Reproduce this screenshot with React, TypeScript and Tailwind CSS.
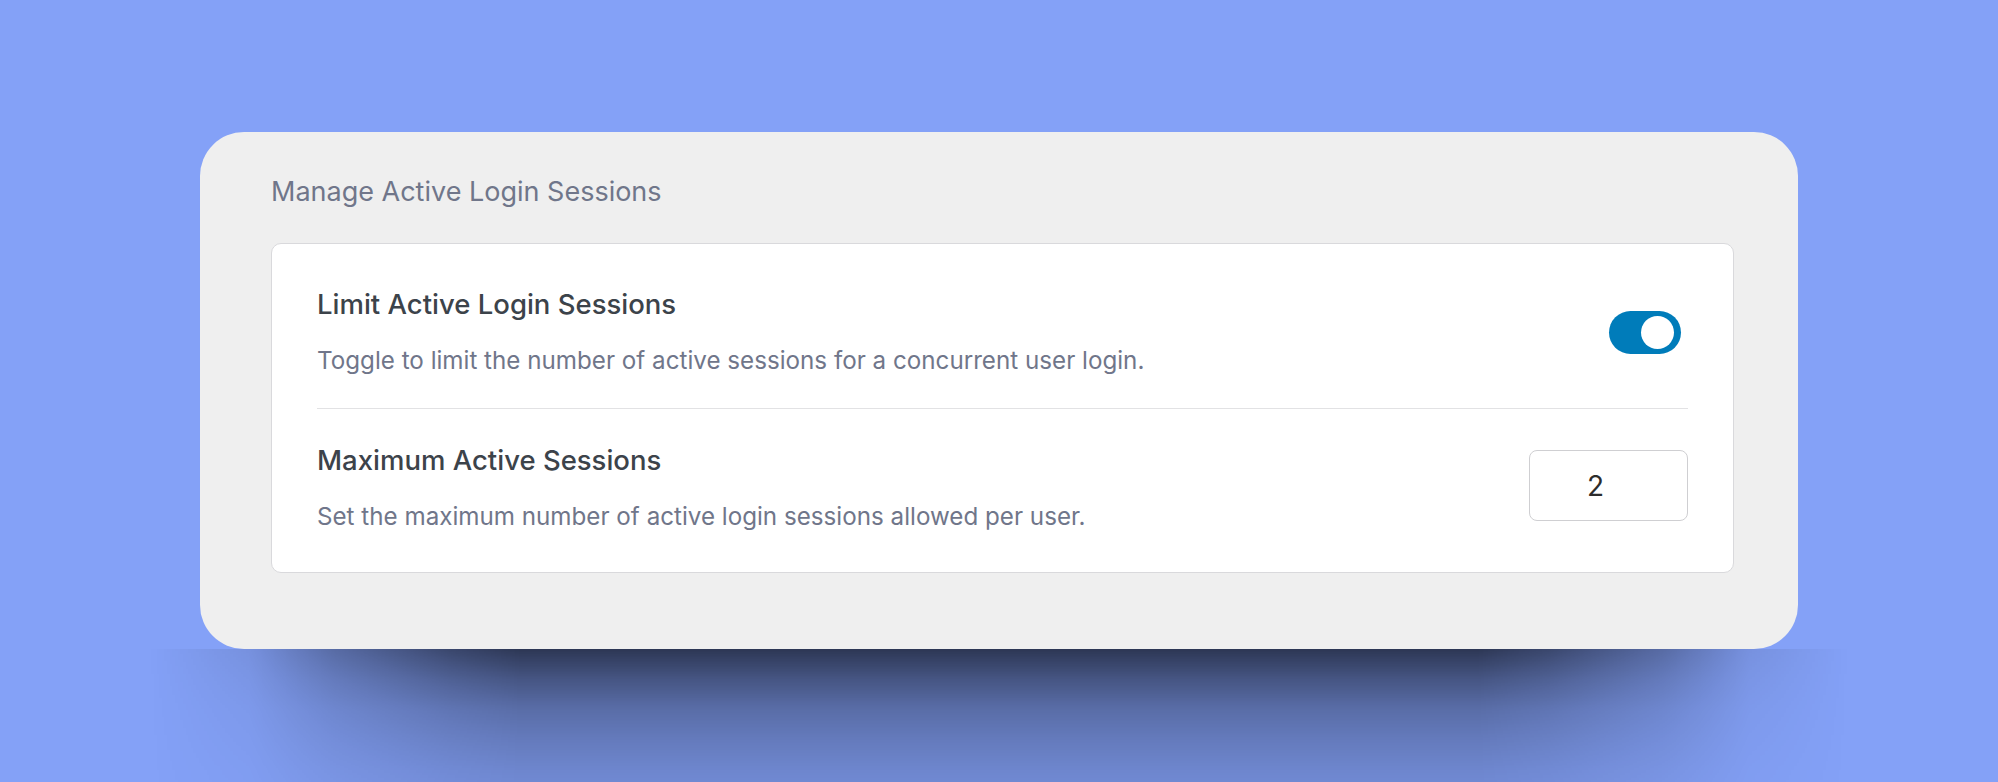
import { useState } from 'react'

function Toggle({ on, onChange }: { on: boolean; onChange: (v: boolean) => void }) {
    return (
        <button
            type="button"
            onClick={() => onChange(!on)}
            className={`mr-[7px] flex h-[43px] w-[72px] shrink-0 items-center rounded-full px-[7px] ${on ? 'justify-end bg-[#007cba]' : 'justify-start bg-[#c3c4c7]'}`}
        >
            <span className="block h-[33px] w-[33px] rounded-full bg-white"></span>
        </button>
    )
}

export default function App() {
    const [limit, setLimit] = useState(true)
    const [max, setMax] = useState('2')

    return (
        <div className="flex h-[782px] w-full justify-center overflow-hidden bg-[#84a1f7] pt-[132px] font-['Inter',sans-serif]">
            <div className="relative h-[517px] w-[1598px]">
                {/* soft drop shadow under the panel */}
                <div className="absolute top-full left-[-50px] right-[-50px] h-[260px] bg-[linear-gradient(to_bottom,rgba(0,0,0,0.66)_0px,rgba(0,0,0,0.47)_30px,rgba(0,0,0,0.32)_60px,rgba(0,0,0,0.24)_90px,rgba(0,0,0,0.17)_120px,rgba(0,0,0,0.09)_170px,rgba(0,0,0,0)_250px)] [mask-image:linear-gradient(to_right,transparent_0px,rgba(0,0,0,0.15)_100px,rgba(0,0,0,0.5)_183px,rgba(0,0,0,0.85)_300px,#000_370px,#000_calc(100%_-_370px),rgba(0,0,0,0.85)_calc(100%_-_300px),rgba(0,0,0,0.5)_calc(100%_-_183px),rgba(0,0,0,0.15)_calc(100%_-_100px),transparent_100%)]"></div>

                <div className="relative h-full rounded-[44px] bg-[#efefef] pl-[71px] pr-[64px] pt-[44px]">
                    <h2 className="text-[27px] leading-[31px] font-normal text-[#70768a]">Manage Active Login Sessions</h2>

                    <div className="mt-[36px] rounded-[10px] border border-[#d9d9dc] bg-white px-[45px]">
                        <div className="flex items-center justify-between border-b border-[#e2e2e4] pt-[44px] pb-[32px]">
                            <div>
                                <h3 className="text-[27.5px] leading-[32px] font-medium text-[#3c434a]">Limit Active Login Sessions</h3>
                                <p className="mt-[26px] text-[24.2px] leading-[30px] text-[#70768a]">
                                    Toggle to limit the number of active sessions for a concurrent user login.
                                </p>
                            </div>
                            <Toggle on={limit} onChange={setLimit} />
                        </div>

                        <div className="flex items-center justify-between pt-[35px] pb-[40px]">
                            <div>
                                <h3 className="text-[27.5px] leading-[32px] font-medium text-[#3c434a]">Maximum Active Sessions</h3>
                                <p className="mt-[26px] text-[24.2px] leading-[30px] text-[#70768a]">
                                    Set the maximum number of active login sessions allowed per user.
                                </p>
                            </div>
                            <input
                                type="number"
                                value={max}
                                onChange={(e) => setMax(e.target.value)}
                                className="mb-[5px] h-[71px] w-[159px] rounded-[8px] border border-[#cfcfd2] bg-white pr-[26px] text-center text-[28px] text-[#2c2c2c] outline-none [appearance:textfield] [&::-webkit-inner-spin-button]:appearance-none"
                            />
                        </div>
                    </div>
                </div>
            </div>
        </div>
    )
}
